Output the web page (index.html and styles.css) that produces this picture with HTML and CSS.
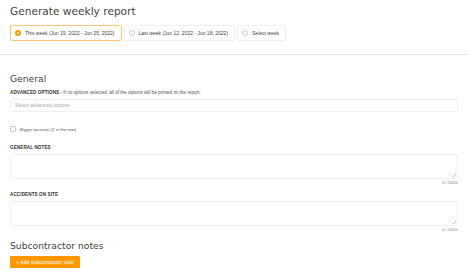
FILE: index.html
```html
<!DOCTYPE html>
<html lang="en">
<head>
    <meta charset="UTF-8">
    <title>Generate weekly report</title>
    <link rel="stylesheet" href="styles.css">
</head>
<body>
    <div class="header">
        <h1>Generate weekly report</h1>
        <div class="week-options">
            <label class="week-option selected">
                <span class="radio"></span>
                This week (Jun 19, 2022 - Jun 25, 2022)
            </label>
            <label class="week-option">
                <span class="radio"></span>
                Last week (Jun 12, 2022 - Jun 18, 2022)
            </label>
            <label class="week-option">
                <span class="radio"></span>
                Select week
            </label>
        </div>
    </div>

    <div class="content">
        <h2>General</h2>
        <div class="field-label"><b>ADVANCED OPTIONS</b> - If no options selected, all of the options will be printed on the report.</div>
        <div class="select-box">Select advanced options</div>

        <label class="check-row">
            <span class="checkbox"></span>
            Bigger pictures (2 in the row)
        </label>

        <div class="form-group">
            <div class="field-label"><b>GENERAL NOTES</b></div>
            <div class="textarea"><span class="resize"></span></div>
            <div class="counter">0 / 5000</div>
        </div>

        <div class="form-group">
            <div class="field-label"><b>ACCIDENTS ON SITE</b></div>
            <div class="textarea"><span class="resize"></span></div>
            <div class="counter">0 / 5000</div>
        </div>

        <h2 class="sub-title">Subcontractor notes</h2>
        <button class="add-btn">+ Add subcontractor note</button>
    </div>
</body>
</html>
```

FILE: styles.css
```css
body {
    margin: 0;
    padding: 0;
    font-family: "Liberation Sans", Arial, sans-serif;
    color: #333;
    background-color: #fff;
}

.header {
    padding: 3px 10px 13px;
    border-bottom: 1px solid #e6e6e6;
}

h1 {
    font-family: "DejaVu Sans", sans-serif;
    font-weight: normal;
    font-size: 10.6px;
    line-height: 16px;
    margin: 0 0 6px;
    color: #444;
}

.week-options {
    display: flex;
    gap: 2px;
}

.week-option {
    display: flex;
    align-items: center;
    gap: 4px;
    height: 16px;
    box-sizing: border-box;
    padding: 0 6px 0 4px;
    border: 1px solid #f0f0f0;
    border-radius: 2px;
    font-size: 5px;
    color: #444;
    box-shadow: 0 0 2px rgba(0, 0, 0, 0.05);
}

.week-option.selected {
    border-color: #fbc878;
}

.radio {
    width: 6px;
    height: 6px;
    box-sizing: border-box;
    border: 1px solid #ccc;
    border-radius: 50%;
}

.selected .radio {
    border: 2px solid #ff9800;
    background-color: #fff;
}

.content {
    padding: 17px 10px 0 10px;
}

h2 {
    font-family: "DejaVu Sans", sans-serif;
    font-weight: normal;
    font-size: 9.2px;
    line-height: 14px;
    margin: 0 0 4px;
    color: #444;
}

.field-label {
    font-size: 4.6px;
    line-height: 6px;
    color: #555;
    margin-bottom: 3px;
}

.field-label b {
    color: #333;
    letter-spacing: 0.1px;
}

.select-box {
    height: 13px;
    box-sizing: border-box;
    border: 1px solid #f0f0f0;
    border-radius: 2px;
    padding: 0 4px;
    font-size: 5px;
    line-height: 11px;
    color: #aaa;
}

.check-row {
    display: flex;
    align-items: center;
    gap: 4px;
    margin: 14px 0 13px;
    font-size: 4.4px;
    color: #555;
}

.checkbox {
    width: 6px;
    height: 6px;
    box-sizing: border-box;
    border: 1px solid #ccc;
    border-radius: 1px;
}

.form-group {
    margin-bottom: 5px;
}

.textarea {
    position: relative;
    height: 25px;
    box-sizing: border-box;
    border: 1px solid #f0f0f0;
    border-radius: 2px;
}

.resize {
    position: absolute;
    right: 1px;
    bottom: 1px;
    width: 3px;
    height: 3px;
    background: linear-gradient(135deg, transparent 45%, #bbb 50%, transparent 60%, transparent 70%, #bbb 75%, transparent 85%);
}

.counter {
    text-align: right;
    font-size: 4.4px;
    line-height: 8px;
    color: #888;
}

.sub-title {
    margin-top: 4px;
    margin-bottom: 3px;
}

.add-btn {
    display: block;
    height: 12px;
    padding: 0 6px;
    border: none;
    border-radius: 1px;
    background-color: #ff9800;
    color: #fff;
    font-family: "Liberation Sans", Arial, sans-serif;
    font-size: 5.2px;
    cursor: pointer;
}
```
